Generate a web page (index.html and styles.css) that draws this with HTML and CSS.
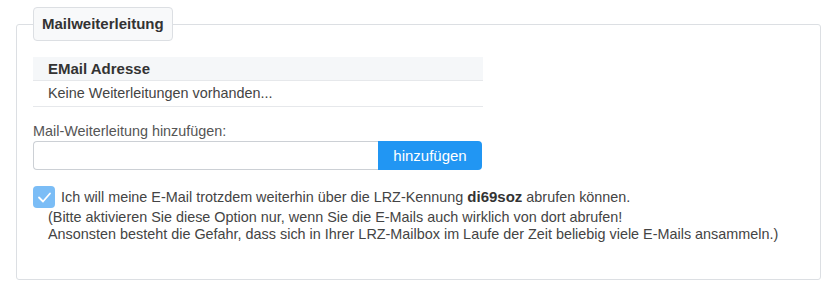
FILE: index.html
```html
<!DOCTYPE html>
<html lang="de">
<head>
    <meta charset="UTF-8">
    <meta name="viewport" content="width=device-width, initial-scale=1.0">
    <title>Mailweiterleitung</title>
    <link rel="stylesheet" href="styles.css">
</head>
<body>
    <fieldset class="box">
        <legend>Mailweiterleitung</legend>

        <table class="forward-table">
            <thead>
                <tr><th>EMail Adresse</th></tr>
            </thead>
            <tbody>
                <tr><td>Keine Weiterleitungen vorhanden...</td></tr>
            </tbody>
        </table>

        <label for="forward" class="add-label">Mail-Weiterleitung hinzufügen:</label>
        <div class="add-group">
            <input type="text" id="forward">
            <button type="button">hinzufügen</button>
        </div>

        <div class="keep-row">
            <span class="check">
                <svg width="22" height="22" viewBox="0 0 22 22">
                    <polyline points="6,11.5 10,15.5 17,7.5" fill="none" stroke="#fff" stroke-width="1.8" stroke-linecap="round" stroke-linejoin="round"/>
                </svg>
            </span>
            <span>Ich will meine E-Mail trotzdem weiterhin über die LRZ-Kennung <b>di69soz</b> abrufen können.</span>
        </div>
        <p class="hint">
            (Bitte aktivieren Sie diese Option nur, wenn Sie die E-Mails auch wirklich von dort abrufen!<br>
            Ansonsten besteht die Gefahr, dass sich in Ihrer LRZ-Mailbox im Laufe der Zeit beliebig viele E-Mails ansammeln.)
        </p>
    </fieldset>
</body>
</html>
```

FILE: styles.css
```css
* {
    box-sizing: border-box;
}

body {
    margin: 0;
    font-family: "Liberation Sans", Arial, sans-serif;
    font-size: 14.4px;
    color: #444;
    background-color: #fff;
}

.box {
    margin: 7px 9px 0 16px;
    padding: 16px 16px 36px 16px;
    border: 1px solid #dcdfe3;
    border-radius: 3px;
    min-width: 0;
}

.box legend {
    height: 34px;
    padding: 0 8px;
    line-height: 32px;
    font-size: 15px;
    font-weight: bold;
    color: #333;
    background-color: #f8f9fa;
    border: 1px solid #dcdfe3;
    border-radius: 4px;
}

.forward-table {
    width: 450px;
    border-collapse: collapse;
}

.forward-table th,
.forward-table td {
    text-align: left;
    padding: 0 15px;
    border-bottom: 1px solid #e6e8eb;
}

.forward-table th {
    height: 23px;
    font-size: 15px;
    font-weight: bold;
    color: #333;
    background-color: #f5f7f9;
}

.forward-table td {
    height: 26px;
}

.add-label {
    display: block;
    margin-top: 15px;
    line-height: 18px;
    color: #555;
}

.add-group {
    display: flex;
    width: 449px;
    margin-top: 1px;
}

.add-group input {
    flex: 1;
    height: 29px;
    border: 1px solid #ccd0d5;
    border-right: none;
    border-radius: 4px 0 0 4px;
    font-size: 14px;
    padding: 0 8px;
}

.add-group button {
    width: 104px;
    height: 29px;
    border: none;
    border-radius: 0 4px 4px 0;
    background-color: #2196f3;
    color: #fff;
    font-family: "Liberation Sans", Arial, sans-serif;
    font-size: 15px;
    cursor: pointer;
}

.keep-row {
    display: flex;
    align-items: center;
    gap: 6px;
    margin-top: 16px;
    height: 22px;
}

.check {
    display: block;
    flex: none;
    width: 22px;
    height: 22px;
    border-radius: 4px;
    background-color: #7bbdf6;
}

.check svg {
    display: block;
}

.keep-row b {
    font-size: 15px;
    color: #333;
}

.hint {
    margin: 1px 0 0 15px;
    line-height: 17px;
}
```
